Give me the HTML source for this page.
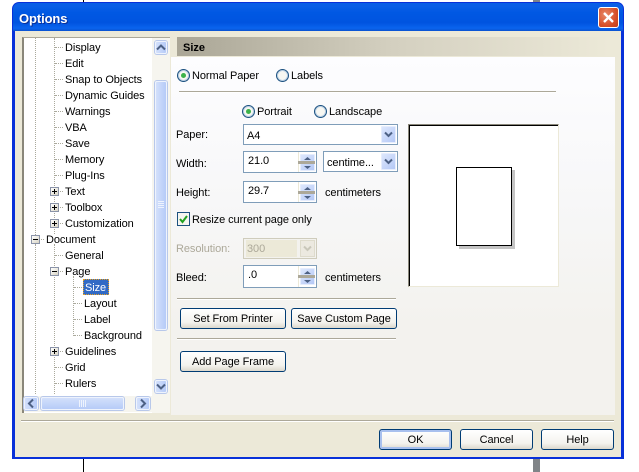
<!DOCTYPE html>
<html><head><meta charset="utf-8"><style>
html,body{margin:0;padding:0;background:#fff}
body{width:639px;height:472px;position:relative;overflow:hidden;font:11px/14px "Liberation Sans",Arial,sans-serif;color:#000}
div,span,svg{position:absolute;box-sizing:border-box}
.t{white-space:nowrap;height:14px;line-height:14px;letter-spacing:-.08px;margin-top:1px}
.hd{border-top:1px dotted #aaa99c;height:1px;width:8px}
.vd{border-left:1px dotted #aaa99c;width:1px}
.pm{width:9px;height:9px;border:1px solid #8a93a8;background:linear-gradient(135deg,#fff,#d8d4c4)}
.pm:before{content:"";position:absolute;left:1px;top:3px;width:5px;height:1px;background:#000}
.pm.p:after{content:"";position:absolute;left:3px;top:1px;width:1px;height:5px;background:#000}
.sb{background:linear-gradient(90deg,#d3e0fb,#b6cbf8);border:1px solid #eef3fd;border-radius:2px;box-shadow:0 0 0 1px #b8c8ea}
.btn{border:1px solid #003c74;border-radius:3px;background:linear-gradient(#fff,#f4f3ee 70%,#dcd8cc);text-align:center;height:21px;line-height:21px;letter-spacing:-.08px}
.inp{background:#fff;border:1px solid #7f9db9}
.cb{background:linear-gradient(135deg,#dde7fd,#b4c8f6);border:1px solid #e6edfd;border-radius:1px}
.sep{height:1px;background:#aca899;box-shadow:0 1px 0 #fff}
.r{width:13px;height:13px;border-radius:50%;border:1px solid #1c5180;background:#f7f7f2;box-shadow:inset 0 0 0 1px #b9cfe4}
.r.on:after{content:"";position:absolute;left:3px;top:3px;width:5px;height:5px;border-radius:50%;background:#3cb24a}
</style></head><body>
<div style="left:83px;top:0;width:1px;height:472px;background:#000"></div>
<div style="left:533px;top:0;width:7px;height:472px;background:#808488"></div>

<div style="left:12px;top:2px;width:612px;height:457px;background:#0831d9;border-radius:7px 7px 0 0"></div>
<div style="left:13px;top:3px;width:610px;height:28px;border-radius:6px 6px 0 0;background:linear-gradient(#0a5fe6,#0a5fe6 12%,#0058e3 35%,#0054e0 70%,#0a64ee 90%,#0a52d0)"></div>
<div class="t" style="left:19px;top:10px;color:#fff;font:bold 13px/16px 'Liberation Sans',sans-serif;height:16px;text-shadow:1px 1px 0 #0b2f96;letter-spacing:-.1px">Options</div>
<div style="left:598px;top:7px;width:21px;height:21px;border:1px solid #fff;border-radius:3px;background:radial-gradient(circle at 35% 35%,#e88a6a,#d8512a 60%,#c03c18)"></div>
<svg style="left:598px;top:7px" width="21" height="21"><path d="M6 6L15 15M15 6L6 15" stroke="#fff" stroke-width="2.4"/></svg>

<div style="left:15px;top:31px;width:606px;height:426px;background:#ece9d8"></div>

<!-- tree -->
<div style="left:22px;top:37px;width:148px;height:376px;border-top:1px solid #aca899;border-left:2px solid #8a877a;background:#fff"></div>
<div style="left:152px;top:38px;width:18px;height:375px;background:#f6f5ef"></div>
<div class="vd" style="left:35px;top:38px;height:197px"></div>
<div class="vd" style="left:35px;top:244px;height:150px"></div>
<div class="vd" style="left:54px;top:38px;height:196px"></div>
<div class="vd" style="left:54px;top:244px;height:150px"></div>
<div class="vd" style="left:73px;top:276px;height:60px"></div>

<div class="hd" style="left:55px;top:47px"></div><div class="t" style="left:65px;top:40px">Display</div>
<div class="hd" style="left:55px;top:63px"></div><div class="t" style="left:65px;top:56px">Edit</div>
<div class="hd" style="left:55px;top:79px"></div><div class="t" style="left:65px;top:72px">Snap to Objects</div>
<div class="hd" style="left:55px;top:95px"></div><div class="t" style="left:65px;top:88px">Dynamic Guides</div>
<div class="hd" style="left:55px;top:111px"></div><div class="t" style="left:65px;top:104px">Warnings</div>
<div class="hd" style="left:55px;top:127px"></div><div class="t" style="left:65px;top:120px">VBA</div>
<div class="hd" style="left:55px;top:143px"></div><div class="t" style="left:65px;top:136px">Save</div>
<div class="hd" style="left:55px;top:159px"></div><div class="t" style="left:65px;top:152px">Memory</div>
<div class="hd" style="left:55px;top:175px"></div><div class="t" style="left:65px;top:168px">Plug-Ins</div>
<div class="hd" style="left:55px;top:191px"></div><div class="pm p" style="left:50px;top:187px"></div><div class="t" style="left:65px;top:184px">Text</div>
<div class="hd" style="left:55px;top:207px"></div><div class="pm p" style="left:50px;top:203px"></div><div class="t" style="left:65px;top:200px">Toolbox</div>
<div class="hd" style="left:55px;top:223px"></div><div class="pm p" style="left:50px;top:219px"></div><div class="t" style="left:65px;top:216px">Customization</div>
<div class="hd" style="left:36px;top:239px;width:8px"></div><div class="pm" style="left:31px;top:235px"></div><div class="t" style="left:46px;top:232px">Document</div>
<div class="hd" style="left:55px;top:255px"></div><div class="t" style="left:65px;top:248px">General</div>
<div class="hd" style="left:55px;top:271px"></div><div class="pm" style="left:50px;top:267px"></div><div class="t" style="left:65px;top:264px">Page</div>
<div class="hd" style="left:74px;top:287px"></div>
<div style="left:83px;top:279px;width:26px;height:16px;background:#316ac5;outline:1px dotted #e8a020;outline-offset:-1px"></div><div class="t" style="left:85px;top:280px;color:#fff">Size</div>
<div class="hd" style="left:74px;top:303px"></div><div class="t" style="left:84px;top:296px">Layout</div>
<div class="hd" style="left:74px;top:319px"></div><div class="t" style="left:84px;top:312px">Label</div>
<div class="hd" style="left:74px;top:335px"></div><div class="t" style="left:84px;top:328px">Background</div>
<div class="hd" style="left:55px;top:351px"></div><div class="pm p" style="left:50px;top:347px"></div><div class="t" style="left:65px;top:344px">Guidelines</div>
<div class="hd" style="left:55px;top:367px"></div><div class="t" style="left:65px;top:360px">Grid</div>
<div class="hd" style="left:55px;top:383px"></div><div class="t" style="left:65px;top:376px">Rulers</div>

<!-- scrollbars -->
<div class="sb" style="left:155px;top:41px;width:12px;height:13px"></div>
<svg style="left:155px;top:41px" width="12" height="13"><path d="M2 8.5L6 4.5L10 8.5" fill="none" stroke="#4d6185" stroke-width="2"/></svg>
<div class="sb" style="left:155px;top:81px;width:12px;height:249px"></div>
<svg style="left:155px;top:200px" width="12" height="10"><path d="M3 1.5H9M3 3.5H9M3 5.5H9M3 7.5H9" stroke="#eef3fd"/></svg>
<div class="sb" style="left:155px;top:380px;width:12px;height:13px"></div>
<svg style="left:155px;top:380px" width="12" height="13"><path d="M2 4.5L6 8.5L10 4.5" fill="none" stroke="#4d6185" stroke-width="2"/></svg>
<div style="left:24px;top:396px;width:128px;height:16px;background:#f6f5ef"></div>
<div class="sb" style="left:24px;top:397px;width:14px;height:13px"></div>
<svg style="left:24px;top:397px" width="14" height="13"><path d="M9 2.5L5 6.5L9 10.5" fill="none" stroke="#4d6185" stroke-width="2"/></svg>
<div class="sb" style="left:41px;top:397px;width:83px;height:13px;background:linear-gradient(#d3e0fb,#b6cbf8)"></div>
<svg style="left:78px;top:399px" width="10" height="9"><path d="M1.500 1V8M3.500 1V8M5.500 1V8M7.500 1V8" stroke="#eef3fd"/></svg>
<div class="sb" style="left:136px;top:397px;width:14px;height:13px"></div>
<svg style="left:136px;top:397px" width="14" height="13"><path d="M5 2.500L9 6.500L5 10.500" fill="none" stroke="#4d6185" stroke-width="2"/></svg>

<!-- panel -->
<div style="left:177px;top:37px;width:433px;height:19px;background:linear-gradient(90deg,#aaa696,#d4d0c0 50%,#ece9d8)"></div>
<div style="left:183px;top:41px;font:bold 11px/14px 'Liberation Sans',sans-serif;height:14px;white-space:nowrap">Size</div>
<div style="left:171px;top:57px;width:444px;height:358px;background:linear-gradient(#fdfdff,#f7f7f8 40%,#f3f2ee 75%)"></div>

<div class="r on" style="left:177px;top:69px"></div><div class="t" style="left:192px;top:68px">Normal Paper</div>
<div class="r" style="left:276px;top:69px"></div><div class="t" style="left:291px;top:68px">Labels</div>
<div class="sep" style="left:179px;top:91px;width:377px"></div>
<div class="r on" style="left:242px;top:105px"></div><div class="t" style="left:257px;top:104px">Portrait</div>
<div class="r" style="left:314px;top:105px"></div><div class="t" style="left:329px;top:104px">Landscape</div>

<div class="t" style="left:176px;top:127px">Paper:</div>
<div class="inp" style="left:243px;top:124px;width:155px;height:21px"></div>
<div class="t" style="left:247px;top:128px">A4</div>
<div class="cb" style="left:381px;top:126px;width:15px;height:17px"></div>
<svg style="left:381px;top:126px" width="15" height="17"><path d="M4 6.500L7.500 10L11 6.500" fill="none" stroke="#4d6185" stroke-width="2"/></svg>

<div class="t" style="left:176px;top:156px">Width:</div>
<div class="inp" style="left:243px;top:151px;width:74px;height:22px"></div>
<div class="t" style="left:248px;top:153px">21.0</div>
<div style="left:298px;top:152px;width:1px;height:20px;background:#ece9d8"></div>
<div class="cb" style="left:300px;top:154px;width:15px;height:17px"></div>
<div style="left:298px;top:161px;width:17px;height:3px;background:#aca899"></div>
<svg style="left:300px;top:154px" width="15" height="17"><path d="M4 6L7.500 3L11 6ZM4 12L7.500 15L11 12Z" fill="#4d6185"/></svg>

<div class="inp" style="left:323px;top:151px;width:75px;height:21px"></div>
<div class="t" style="left:327px;top:155px">centime...</div>
<div class="cb" style="left:381px;top:153px;width:15px;height:17px"></div>
<svg style="left:381px;top:153px" width="15" height="17"><path d="M4 6.500L7.500 10L11 6.500" fill="none" stroke="#4d6185" stroke-width="2"/></svg>

<div class="t" style="left:176px;top:185px">Height:</div>
<div class="inp" style="left:243px;top:181px;width:74px;height:22px"></div>
<div class="t" style="left:248px;top:183px">29.7</div>
<div style="left:298px;top:182px;width:1px;height:20px;background:#ece9d8"></div>
<div class="cb" style="left:300px;top:184px;width:15px;height:17px"></div>
<div style="left:298px;top:191px;width:17px;height:3px;background:#aca899"></div>
<svg style="left:300px;top:184px" width="15" height="17"><path d="M4 6L7.500 3L11 6ZM4 12L7.500 15L11 12Z" fill="#4d6185"/></svg>
<div class="t" style="left:325px;top:185px">centimeters</div>

<div style="left:177px;top:212px;width:13px;height:14px;border:1px solid #1c5180;background:#f5f5f0"></div>
<svg style="left:177px;top:212px" width="13" height="14"><path d="M3 7L5.500 10L10 4" fill="none" stroke="#21a121" stroke-width="2"/></svg>
<div class="t" style="left:192px;top:212px">Resize current page only</div>

<div class="t" style="left:176px;top:241px;color:#aca899">Resolution:</div>
<div style="left:243px;top:238px;width:74px;height:21px;border:1px solid #cfccbc;background:#f3f2ee"></div>
<div style="left:246px;top:240px;width:51px;height:17px;background:#ece9d8"></div>
<div class="t" style="left:247px;top:241px;color:#aca899">300</div>
<div style="left:300px;top:240px;width:15px;height:17px;background:#ece9e0;border:1px solid #dedbcc"></div>
<svg style="left:300px;top:240px" width="15" height="17"><path d="M4 6.500L7.500 10L11 6.500" fill="none" stroke="#c9c7ba" stroke-width="2"/></svg>

<div class="t" style="left:176px;top:270px">Bleed:</div>
<div class="inp" style="left:243px;top:265px;width:74px;height:23px"></div>
<div class="t" style="left:248px;top:267px">.0</div>
<div style="left:298px;top:266px;width:1px;height:21px;background:#ece9d8"></div>
<div class="cb" style="left:300px;top:268px;width:15px;height:17px"></div>
<div style="left:298px;top:275px;width:17px;height:3px;background:#aca899"></div>
<svg style="left:300px;top:268px" width="15" height="17"><path d="M4 6L7.500 3L11 6ZM4 12L7.500 15L11 12Z" fill="#4d6185"/></svg>
<div class="t" style="left:325px;top:270px">centimeters</div>

<div class="sep" style="left:177px;top:298px;width:219px"></div>
<div class="btn" style="left:180px;top:308px;width:106px">Set From Printer</div>
<div class="btn" style="left:291px;top:308px;width:106px">Save Custom Page</div>
<div class="sep" style="left:177px;top:338px;width:219px"></div>
<div class="btn" style="left:180px;top:351px;width:106px">Add Page Frame</div>

<!-- preview -->
<div style="left:408px;top:124px;width:151px;height:163px;background:#fff;border-top:1px solid #8a877a;border-left:1px solid #8a877a;border-right:1px solid #ece9d8;border-bottom:1px solid #ece9d8"></div>
<div style="left:409px;top:125px;width:149px;height:1px;background:#000"></div>
<div style="left:409px;top:125px;width:1px;height:161px;background:#000"></div>
<div style="left:459px;top:170px;width:56px;height:79px;background:#c4c4c4"></div>
<div style="left:456px;top:167px;width:56px;height:79px;background:#fff;border:1px solid #000"></div>

<!-- footer -->
<div class="sep" style="left:21px;top:420px;width:593px"></div>
<div class="btn" style="left:379px;top:429px;width:73px;height:21px;box-shadow:inset 0 0 0 2px #a8c0ee">OK</div>
<div class="btn" style="left:460px;top:429px;width:73px;height:21px">Cancel</div>
<div class="btn" style="left:541px;top:429px;width:73px;height:21px">Help</div>
</body></html>
